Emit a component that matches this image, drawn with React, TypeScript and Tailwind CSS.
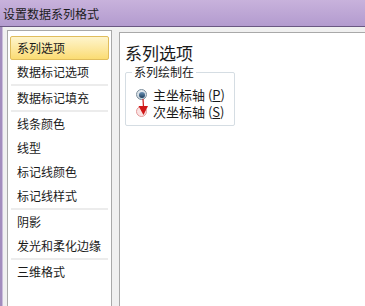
import React from "react";

const items: { label: string; sepBefore?: boolean; selected?: boolean }[] = [
  { label: "系列选项", selected: true },
  { label: "数据标记选项" },
  { label: "数据标记填充", sepBefore: true },
  { label: "线条颜色", sepBefore: true },
  { label: "线型" },
  { label: "标记线颜色" },
  { label: "标记线样式" },
  { label: "阴影", sepBefore: true },
  { label: "发光和柔化边缘" },
  { label: "三维格式", sepBefore: true },
];

export default function App() {
  return (
    <div
      className="w-[365px] h-[306px] overflow-hidden flex flex-col bg-[#f0f0f0] text-[#1a1a1a]"
      style={{ fontFamily: '"Noto Sans CJK SC", "Noto Sans", sans-serif' }}
    >
      {/* Title bar */}
      <div className="h-[27px] shrink-0 bg-gradient-to-b from-[#c8b2dc] to-[#b39bcf] border-b border-[#6a5882] flex items-center pl-[3px]">
        <span className="text-[12px] leading-none text-[#1b1b1b] mt-[2px]">设置数据系列格式</span>
      </div>
      <div className="flex flex-1 min-h-0">
        <div className="w-[3px] shrink-0 bg-[#a28cbd] border-r border-[#cbbedb]" />
        <div className="flex flex-1 min-h-0 pl-[4px] gap-[7px]">
          {/* Left list */}
          <div className="w-[105px] shrink-0 mt-[3px] -mb-[10px] bg-white border border-[#a9a9a9] px-[2px] pt-[5px] flex flex-col">
            {items.map((it) => (
              <React.Fragment key={it.label}>
                {it.sepBefore && <div className="h-[2px] mx-[1px] bg-[#ececec]" />}
                <div
                  className={
                    it.selected
                      ? "h-[24px] flex items-center pl-[6px] text-[12px] rounded-[2px] border border-[#e0bd5c] bg-gradient-to-b from-[#fef4cb] to-[#fbdc72]"
                      : "h-[24px] flex items-center pl-[6px] text-[12px] border border-transparent"
                  }
                >
                  {it.label}
                </div>
              </React.Fragment>
            ))}
          </div>
          {/* Right panel */}
          <div className="flex-1 mt-[5px] -mr-[10px] -mb-[10px] bg-white border border-[#a9a9a9] pl-[5px] pt-[10px]">
            <div className="text-[17px] leading-[20px] text-[#1a1a1a]">系列选项</div>
            <div className="relative mt-[9px] w-[110px] h-[54px] border border-[#d5dde3] rounded-[2px]">
              <div className="absolute left-[6px] -top-[8px] bg-white px-[2px] text-[12px] leading-[14px]">
                系列绘制在
              </div>
              <div className="flex flex-col pt-[13px] pl-[10px]">
                <div className="h-[17px] flex items-center gap-[6px]">
                  <span className="w-[11px] h-[11px] rounded-full border border-[#7d8e9c] bg-gradient-to-b from-[#e6ecf1] to-[#c8d3dc] flex items-center justify-center">
                    <span className="w-[6px] h-[6px] rounded-full bg-gradient-to-b from-[#6d94b8] to-[#1d3d5c]" />
                  </span>
                  <span className="text-[13px] leading-none">
                    主坐标轴 (<span className="underline">P</span>)
                  </span>
                </div>
                <div className="h-[17px] flex items-center gap-[6px]">
                  <span className="w-[11px] h-[11px] rounded-full border border-[#e39a9a] bg-[#fbe3e3]" />
                  <span className="text-[13px] leading-none">
                    次坐标轴 (<span className="underline">S</span>)
                  </span>
                </div>
              </div>
              <svg className="absolute left-[10px] top-[24px]" width="14" height="22" viewBox="0 0 14 22">
                <line x1="7" y1="2" x2="7.5" y2="10" stroke="#d42020" strokeWidth="1.2" />
                <polygon points="2.5,9 12,9 7.5,18" fill="#d01818" />
              </svg>
            </div>
          </div>
        </div>
      </div>
    </div>
  );
}
